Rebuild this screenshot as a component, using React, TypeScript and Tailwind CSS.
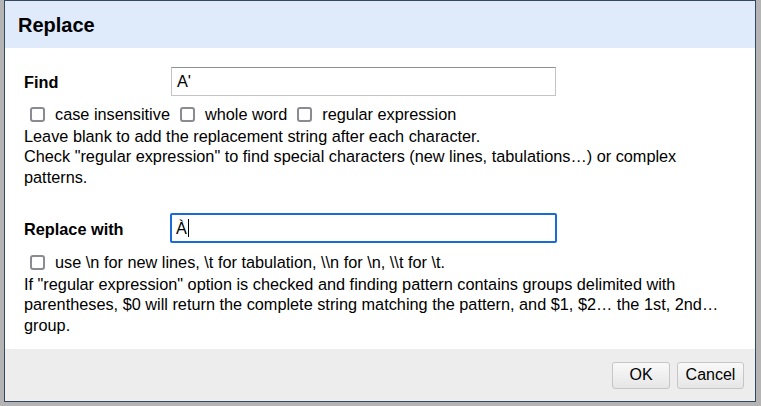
import React from "react";

function Box() {
  return (
    <span className="inline-block h-[15px] w-[15px] shrink-0 rounded-[3px] border-2 border-[#8a8a92] bg-white" />
  );
}

function Check({ label }: { label: string }) {
  return (
    <label className="flex items-center gap-[10px]">
      <Box />
      <span>{label}</span>
    </label>
  );
}

export default function App() {
  return (
    <div
      className="h-[406px] w-[761px] overflow-hidden bg-[#b4b4b4] text-[16.3px] leading-[20.5px] text-black"
      style={{ fontFamily: '"Liberation Sans", Arial, sans-serif' }}
    >
      <div className="ml-[4px] flex h-[402px] w-[752px] flex-col border border-[#34495e] bg-white">
        <div className="flex h-[47px] items-center bg-[#dfeafb] pl-[13px]">
          <h1 className="text-[20px] font-bold leading-none">Replace</h1>
        </div>

        <div className="flex-1 pl-[19px] pr-[24px] pt-[19px]">
          <div className="flex items-center">
            <span className="mt-[2px] w-[147px] font-bold">Find</span>
            <div className="flex h-[29px] w-[385px] items-center border border-[#c4c4c4] border-t-[#8f8f8f] px-[5px]">
              A'
            </div>
          </div>
          <div className="ml-[6px] mt-[8px] flex items-center gap-[10px]">
            <Check label="case insensitive" />
            <Check label="whole word" />
            <Check label="regular expression" />
          </div>
          <p className="mt-[1px]">
            Leave blank to add the replacement string after each character.
            <br />
            Check "regular expression" to find special characters (new lines, tabulations…) or complex patterns.
          </p>

          <div className="mt-[26px] flex items-center">
            <span className="mt-[2px] w-[146px] font-bold">Replace with</span>
            <div className="flex h-[30px] w-[387px] items-center rounded-[2px] border-2 border-[#1a6ad8] px-[4px]">
              À<span className="ml-[1px] inline-block h-[18px] w-px bg-black" />
            </div>
          </div>
          <div className="ml-[6px] mt-[9px] flex items-center">
            <Check label={"use \\n for new lines, \\t for tabulation, \\\\n for \\n, \\\\t for \\t."} />
          </div>
          <p className="mt-[1px]">
            If "regular expression" option is checked and finding pattern contains groups delimited with parentheses, $0 will return the complete string matching the pattern, and $1, $2… the 1st, 2nd… group.
          </p>
        </div>

        <div className="flex h-[52px] items-center justify-end gap-[7px] bg-[#ededed] pr-[11px]">
          <button className="h-[27px] w-[58px] rounded-[3px] border border-[#c6c6c6] bg-gradient-to-b from-[#f9f9f9] to-[#e6e6e6] text-[16px]">
            OK
          </button>
          <button className="h-[27px] w-[67px] rounded-[3px] border border-[#c6c6c6] bg-gradient-to-b from-[#f9f9f9] to-[#e6e6e6] text-[16px]">
            Cancel
          </button>
        </div>
      </div>
    </div>
  );
}
